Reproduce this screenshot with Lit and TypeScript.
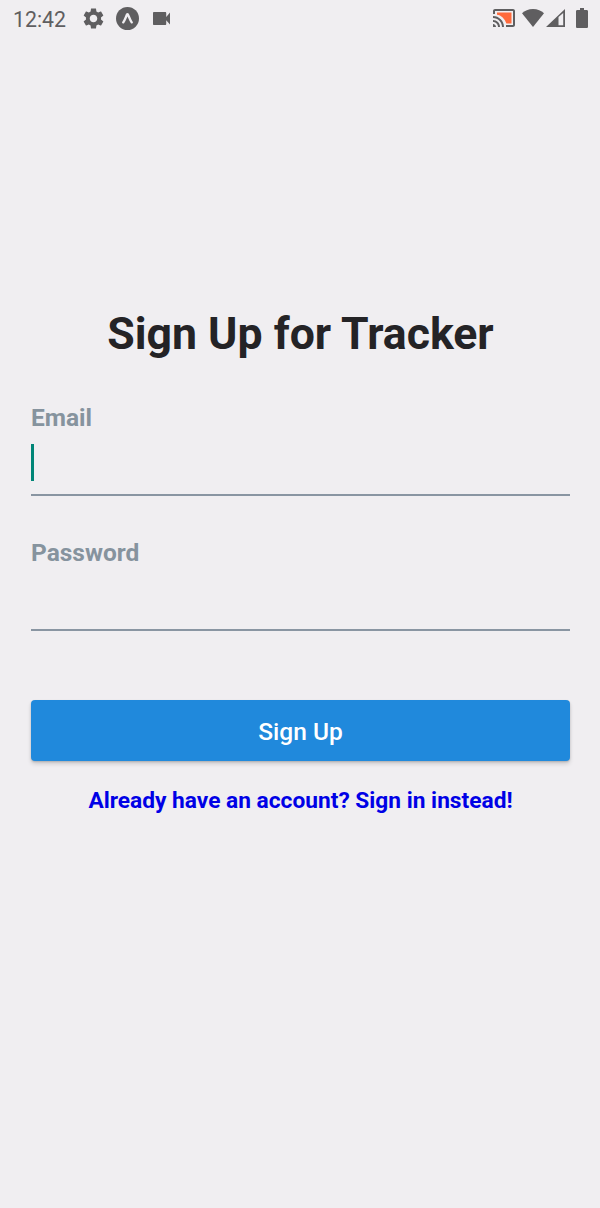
import { LitElement, html, css } from "lit";
import { customElement, property } from "lit/decorators.js";

@customElement("status-bar")
class StatusBar extends LitElement {
  static styles = css`
    :host { display: flex; align-items: center; height: 36px; padding: 0 12px 0 13px; color: #5f5e60; }
    .time { font-size: 21.300px; line-height: 36px; width: 70px; padding-top: 3px; }
    .icons { display: flex; align-items: center; }
    .left { gap: 12px; flex: 1; }
    svg { display: block; fill: currentColor; }
    .cam { margin-left: 2px; }
    .wifi { margin-left: 7px; }
    .cell { margin-left: 2px; }
    .battery { margin-left: 11px; }
  `;
  render() {
    return html`
      <span class="time">12:42</span>
      <div class="icons left">
        <svg width="21" height="21" viewBox="2 2 20 20"><path d="M19.14 12.94c.04-.3.06-.61.06-.94 0-.32-.02-.64-.07-.94l2.03-1.58c.18-.14.23-.41.12-.61l-1.92-3.32c-.12-.22-.37-.29-.59-.22l-2.39.96c-.5-.38-1.03-.7-1.62-.94l-.36-2.54c-.04-.24-.24-.41-.48-.41h-3.84c-.24 0-.43.17-.47.41l-.36 2.54c-.59.24-1.13.57-1.62.94l-2.39-.96c-.22-.08-.47 0-.59.22L2.74 8.87c-.12.21-.08.47.12.61l2.03 1.58c-.05.3-.09.63-.09.94s.02.64.07.94l-2.03 1.58c-.18.14-.23.41-.12.61l1.92 3.32c.12.22.37.29.59.22l2.39-.96c.5.38 1.03.7 1.62.94l.36 2.54c.05.24.24.41.48.41h3.84c.24 0 .44-.17.47-.41l.36-2.54c.59-.24 1.13-.56 1.62-.94l2.39.96c.22.08.47 0 .59-.22l1.92-3.32c.12-.22.07-.47-.12-.61l-2.01-1.58zM12 15.6c-1.98 0-3.6-1.62-3.6-3.6s1.62-3.6 3.6-3.6 3.6 1.62 3.6 3.6-1.62 3.6-3.6 3.6z"/></svg>
        <svg width="23" height="23" viewBox="0 0 23 23"><circle cx="11.5" cy="11.5" r="11.5"/><path d="M7.2 15.4C9 13.2 10 9.5 11.1 7.4c.2-.4.6-.4.8 0C13 9.500 14 13.200 15.800 15.400" fill="none" stroke="#f0eef1" stroke-width="2.300" stroke-linecap="round"/></svg>
        <svg class="cam" width="17" height="13" viewBox="3 6 18 12" preserveAspectRatio="none"><path d="M17 10.500V7c0-.55-.45-1-1-1H4c-.55 0-1 .45-1 1v10c0 .55.45 1 1 1h12c.55 0 1-.45 1-1v-3.500l4 4v-11l-4 4z"/></svg>
      </div>
      <div class="icons">
        <svg width="22" height="18" viewBox="1 3 22 18"><path d="M5 6.500v2.130C8.960 8.900 13.090 13 14.370 17.500H19.500V6.500z" fill="#ff6a3c"/><path d="M1 18v3h3c0-1.660-1.340-3-3-3zm0-4v2c2.760 0 5 2.240 5 5h2c0-3.870-3.130-7-7-7zm0-4v2c4.970 0 9 4.030 9 9h2c0-6.080-4.930-11-11-11zM21 3H3c-1.100 0-2 .9-2 2v3h2V5h18v14h-7v2h7c1.100 0 2-.9 2-2V5c0-1.100-.9-2-2-2z"/></svg>
        <svg class="wifi" width="22" height="18" viewBox="0 0 22 18"><path d="M11 18 0 4.200C2.600 1.800 6.500 0 11 0s8.400 1.800 11 4.200z"/></svg>
        <svg class="cell" width="19" height="18" viewBox="0 0 19 18"><path fill-rule="evenodd" d="M0 18 19 0v18zM12.500 8v8.300h4.700V4z"/></svg>
        <svg class="battery" width="12" height="20" viewBox="0 0 12 20"><path d="M4 0h4v2h2.700c.7 0 1.300.6 1.300 1.300v15.400c0 .7-.6 1.300-1.300 1.300H1.300C.6 20 0 19.400 0 18.700V3.300C0 2.600.6 2 1.300 2H4z"/></svg>
      </div>
    `;
  }
}

@customElement("form-field")
class FormField extends LitElement {
  @property() label = "";
  @property({ type: Boolean }) active = false;
  static styles = css`
    :host { display: block; height: 94px; box-sizing: border-box; border-bottom: 2px solid #8995a2; }
    .label { font-size: 24.500px; font-weight: 700; line-height: 32px; color: #86939e; }
    .input { display: flex; align-items: center; height: 61px; box-sizing: border-box; }
    .caret { width: 3px; height: 37px; background: #008577; margin-bottom: 4px; }
  `;
  render() {
    return html`
      <div class="label">${this.label}</div>
      <div class="input">${this.active ? html`<div class="caret"></div>` : null}</div>
    `;
  }
}

@customElement("app-root")
class AppRoot extends LitElement {
  static styles = css`
    :host { display: block; height: 1208px; overflow: hidden; background: #f0eef1; font-family: Roboto, sans-serif; }
    .form { display: flex; flex-direction: column; padding: 268px 30px 0 31px; }
    .title { margin: 0; height: 60px; line-height: 60px; font-size: 44.600px; font-weight: 700; text-align: center; color: #242326; white-space: nowrap; }
    .email { margin-top: 38px; }
    .password { margin-top: 41px; }
    .button { margin-top: 69px; height: 61px; border: 0; border-radius: 4px; padding: 2px 0 0; background: #2089dc; color: #fff; font: 500 24.500px/59px Roboto, sans-serif; text-align: center; box-shadow: 0 3px 4px rgba(0, 0, 0, 0.140), 0 1px 2px rgba(0, 0, 0, 0.160); }
    .link { margin-top: 24px; line-height: 32px; font-size: 22.730px; font-weight: 700; text-align: center; color: #0000e6; white-space: nowrap; text-decoration: none; }
  `;
  render() {
    return html`
      <status-bar></status-bar>
      <main class="form">
        <h1 class="title">Sign Up for Tracker</h1>
        <form-field class="email" label="Email" active></form-field>
        <form-field class="password" label="Password"></form-field>
        <button class="button">Sign Up</button>
        <a class="link">Already have an account? Sign in instead!</a>
      </main>
    `;
  }
}
